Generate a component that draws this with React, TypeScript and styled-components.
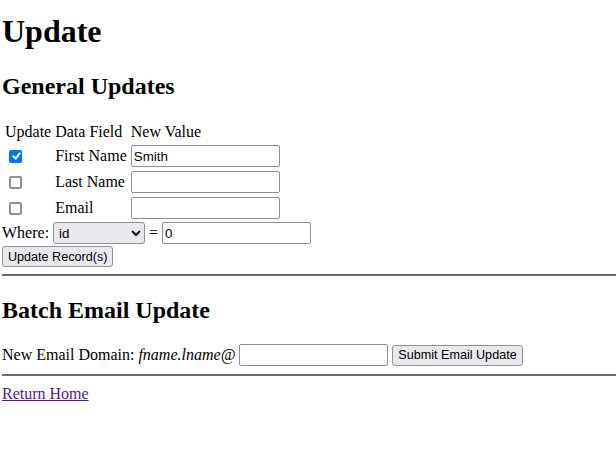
import styled, { createGlobalStyle } from "styled-components";

const GlobalStyle = createGlobalStyle`
  html, body {
    margin: 0;
    background: #ffffff;
  }
  body {
    padding: 0 0 0 2px;
    font-family: "Liberation Serif", "Times New Roman", serif;
    font-size: 16px;
    color: #000000;
  }
`;

const Page = styled.div`
  padding-top: 13px;
`;

const Title = styled.h1`
  font-size: 32px;
  font-weight: bold;
  margin: 0 0 23px 0;
`;

const Heading = styled.h2<{ $top?: number }>`
  font-size: 24px;
  font-weight: bold;
  margin: ${(p) => p.$top ?? 0}px 0 20px 0;
`;

const Table = styled.table`
  border-spacing: 2px;
  td,
  th {
    padding: 1px;
    font-weight: normal;
    text-align: left;
    vertical-align: middle;
  }
`;

const Check = styled.input`
  appearance: none;
  box-sizing: border-box;
  position: relative;
  width: 13px;
  height: 13px;
  margin: 3px 3px 3px 4px;
  border: 2px solid #8f8f9d;
  border-radius: 2px;
  background: #fff;
  vertical-align: middle;
  &:checked {
    border-color: #0075ff;
    background: #0075ff;
  }
  &:checked::after {
    content: "";
    position: absolute;
    left: 2.5px;
    top: -0.5px;
    width: 3px;
    height: 6px;
    border: solid #fff;
    border-width: 0 2px 2px 0;
    transform: rotate(40deg);
  }
`;

const TextInput = styled.input<{ $w?: number }>`
  box-sizing: border-box;
  width: ${(p) => p.$w ?? 149}px;
  height: 22px;
  padding: 1px 2px;
  border: 1px solid #8f8f9d;
  border-radius: 2px;
  font-family: "Liberation Sans", Arial, sans-serif;
  font-size: 13.33px;
  color: #000;
  background: #fff;
  vertical-align: middle;
  margin: 0;
`;

const Row = styled.div`
  display: flex;
  align-items: center;
  gap: 4px;
  white-space: nowrap;
`;

const Select = styled.select`
  box-sizing: border-box;
  width: 92px;
  height: 22px;
  padding: 0 1px;
  border: 1px solid #8f8f9d;
  border-radius: 3px;
  background: #e9e9ed;
  font-family: "Liberation Sans", Arial, sans-serif;
  font-size: 13.33px;
  color: #000;
`;

const Button = styled.button`
  box-sizing: border-box;
  height: 21px;
  padding: 1px 5px;
  border: 1px solid #8f8f9d;
  border-radius: 3px;
  background: #e9e9ed;
  font-family: "Liberation Sans", Arial, sans-serif;
  font-size: 12.6px;
  color: #000;
  cursor: pointer;
`;

const ButtonRow = styled.div`
  margin-top: 2px;
`;

const Rule = styled.hr<{ $top: number }>`
  margin: ${(p) => p.$top}px 0 0 0;
  border: none;
  height: 2px;
  background: #6b6b6b;
`;

const Italic = styled.i`
  font-style: italic;
`;

const HomeLink = styled.a`
  display: inline-block;
  margin-top: 9px;
  color: #551a8b;
  text-decoration: underline;
`;

const fields = [
  { label: "First Name", value: "Smith", checked: true },
  { label: "Last Name", value: "", checked: false },
  { label: "Email", value: "", checked: false },
];

export default function App() {
  return (
    <Page>
      <GlobalStyle />
      <Title>Update</Title>
      <Heading>General Updates</Heading>
      <form onSubmit={(e) => e.preventDefault()}>
        <Table>
          <thead>
            <tr>
              <th>Update</th>
              <th>Data Field</th>
              <th>New Value</th>
            </tr>
          </thead>
          <tbody>
            {fields.map((f) => (
              <tr key={f.label}>
                <td>
                  <Check type="checkbox" defaultChecked={f.checked} />
                </td>
                <td>{f.label}</td>
                <td>
                  <TextInput type="text" defaultValue={f.value} />
                </td>
              </tr>
            ))}
          </tbody>
        </Table>
        <Row>
          Where:
          <Select defaultValue="id">
            <option value="id">id</option>
            <option value="fname">first_name</option>
            <option value="lname">last_name</option>
          </Select>
          =
          <TextInput type="text" defaultValue="0" />
        </Row>
        <ButtonRow>
          <Button type="submit">Update Record(s)</Button>
        </ButtonRow>
      </form>
      <Rule $top={7} />
      <Heading $top={21}>Batch Email Update</Heading>
      <Row>
        <span>
          New Email Domain: <Italic>fname.lname@</Italic>
        </span>
        <TextInput type="text" />
        <Button type="submit">Submit Email Update</Button>
      </Row>
      <Rule $top={8} />
      <HomeLink href="#">Return Home</HomeLink>
    </Page>
  );
}
